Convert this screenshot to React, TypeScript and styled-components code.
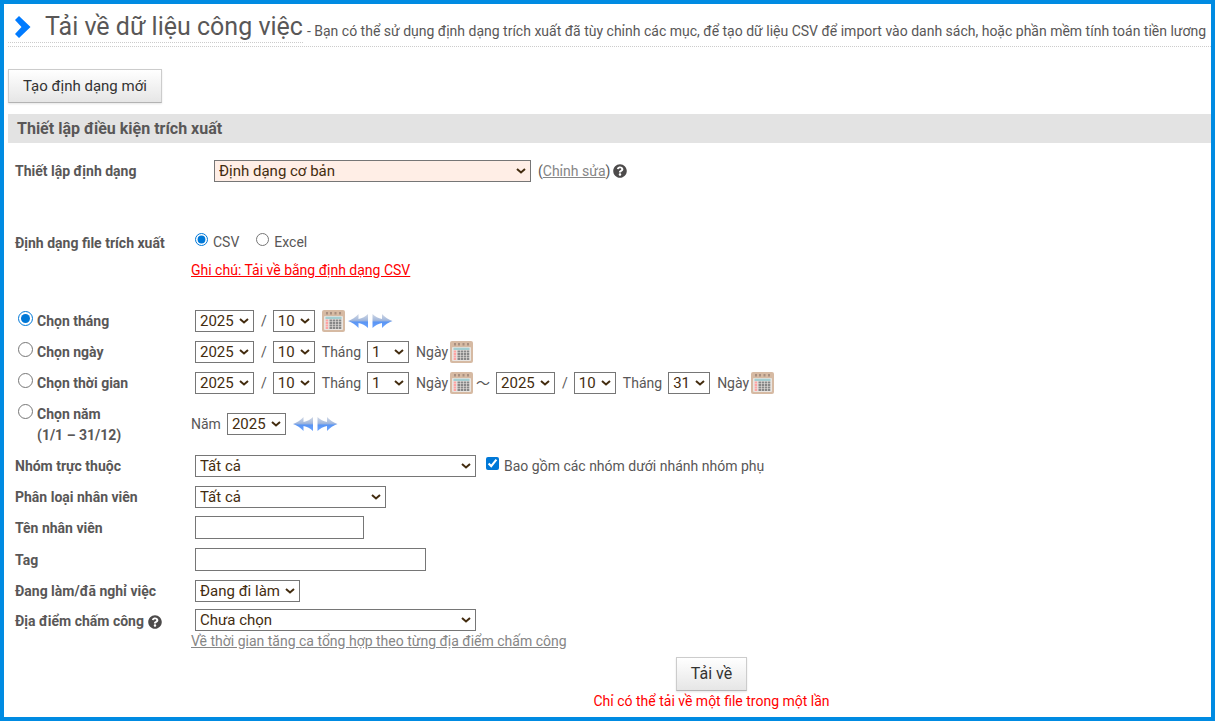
import React from "react";
import styled, { createGlobalStyle } from "styled-components";

const Global = createGlobalStyle`
  * { box-sizing: border-box; }
  body {
    margin: 0;
    background: #fff;
    color: #595757;
    font-family: Roboto, "Noto Sans", "Noto Sans CJK JP", sans-serif;
    font-size: 14px;
    line-height: 20px;
  }
  #root { min-height: 100vh; display: flex; }
`;

const Page = styled.main`
  flex: 1;
  min-width: 0;
  padding: 4px 0 4px 4px;
  border: 4px solid #008be2;
`;

const TitleBar = styled.header`
  display: flex;
  align-items: flex-start;
  height: 39px;
  border-bottom: 1px dotted #ccc;
`;

const Title = styled.h1`
  display: flex;
  align-items: center;
  height: 35px;
  margin: 0;
  padding: 3px 0 0 7px;
  gap: 13px;
  border-bottom: 1px dotted #ccc;
  font-size: 25px;
  font-weight: 400;
  line-height: 32px;
  white-space: nowrap;
`;

const Lead = styled.p`
  margin: 0;
  padding: 13px 0 0 4px;
  white-space: nowrap;
`;

const Button = styled.button<{ $large?: boolean }>`
  height: 34px;
  padding: 0 14px;
  border: 1px solid #ccc;
  border-bottom-color: #b3b3b3;
  background: linear-gradient(#fff, #e6e6e6);
  box-shadow: 0 1px 2px rgba(0, 0, 0, 0.1);
  color: #333;
  font: 400 ${(p) => (p.$large ? 16 : 15)}px/20px Roboto, sans-serif;
`;

const Toolbar = styled.div`
  padding: 22px 0 11px;
`;

const SectionTitle = styled.h2`
  margin: 0;
  padding: 5px 9px 4px;
  background: #e3e3e3;
  font-size: 16px;
  line-height: 20px;
`;

const Form = styled.form`
  display: flex;
  flex-direction: column;
  padding: 12px 0 0 7px;
`;

const Row = styled.div<{ $height?: number; $top?: number }>`
  display: grid;
  grid-template-columns: 176px 1fr;
  align-items: ${(p) => (p.$top ? "start" : "center")};
  min-height: ${(p) => p.$height ?? 31}px;
  padding-top: ${(p) => p.$top ?? 0}px;
`;

const Label = styled.label`
  display: flex;
  align-items: center;
  gap: 4px;
  padding-top: 2px;
  font-weight: 700;
  line-height: 21px;
`;

const Choice = styled.label<{ $strong?: boolean }>`
  display: flex;
  align-items: flex-start;
  gap: ${(p) => (p.$strong ? 4 : 5)}px;
  padding-top: ${(p) => (p.$strong ? 2 : 1)}px;
  font-weight: ${(p) => (p.$strong ? 700 : 400)};
  line-height: 21px;
`;

const Tick = styled.input<{ $large?: boolean }>`
  width: ${(p) => (p.$large ? 15 : 13)}px;
  height: ${(p) => (p.$large ? 15 : 13)}px;
  margin: ${(p) => (p.$large ? "0 0 0 3px" : "1px 0 0 4px")};
  flex: none;
  accent-color: #0078d7;
`;

const Fields = styled.div<{ $indent?: number }>`
  display: flex;
  align-items: center;
  padding-left: ${(p) => p.$indent ?? 4}px;
`;

const Stack = styled.div<{ $gap?: number }>`
  display: flex;
  flex-direction: column;
  align-items: flex-start;
  gap: ${(p) => p.$gap ?? 0}px;
`;

const Gap = styled.span<{ $l?: number; $r?: number }>`
  padding-left: ${(p) => p.$l ?? 7}px;
  padding-right: ${(p) => p.$r ?? 6}px;
`;

const arrow =
  "data:image/svg+xml,%3Csvg xmlns='http://www.w3.org/2000/svg' width='10' height='6'%3E%3Cpath d='M1 1 L5 4.500 L9 1' fill='none' stroke='%23432c0f' stroke-width='2'/%3E%3C/svg%3E";

const Select = styled.select<{ $width: number; $tint?: boolean }>`
  appearance: none;
  width: ${(p) => p.$width}px;
  height: 22px;
  padding: 0 0 0 4px;
  border: 1px solid #767676;
  border-radius: 0;
  background: ${(p) => (p.$tint ? "#ffeee6" : "#fff")} url("${arrow}") no-repeat right 4px center;
  color: #432c0f;
  font: 400 15px/20px Roboto, sans-serif;
`;

const TextBox = styled.input<{ $width: number }>`
  width: ${(p) => p.$width}px;
  height: 23px;
  padding: 1px 4px;
  border: 1px solid #767676;
  color: #432c0f;
  font: 400 15px/20px Roboto, sans-serif;
`;

const Link = styled.a`
  color: #868686;
`;

const Note = styled.span<{ $underline?: boolean }>`
  color: #f00;
  text-decoration: ${(p) => (p.$underline ? "underline" : "none")};
`;

const IconButton = styled.button`
  display: flex;
  padding: 0;
  border: 0;
  background: none;
`;

const Steps = styled.div<{ $indent?: number }>`
  display: flex;
  gap: 3px;
  padding-left: ${(p) => p.$indent ?? 3}px;
`;

const Footer = styled.div`
  display: flex;
  flex-direction: column;
  align-items: center;
  padding: 5px 0 0 197px;
`;

const Chevron = () => (
  <svg width="17" height="24" viewBox="0 0 17 24" aria-hidden="true">
    <path d="M0 5 L4 1 L15.500 12 L4 23 L0 19 L6.500 12 Z" fill="#007bff" />
  </svg>
);

const Help = () => (
  <svg width="14" height="14" viewBox="0 0 512 512" aria-label="?">
    <path
      fill="#4d4b4b"
      d="M504 256c0 137-111 248-248 248S8 393 8 256 119 8 256 8s248 111 248 248zM262.700 90c-54.500 0-89.300 23-116.500 63.800-3.500 5.300-2.400 12.400 2.700 16.300l34.700 26.300c5.200 3.900 12.600 3 16.700-2.100 17.900-22.700 30.100-35.800 57.300-35.800 20.400 0 45.700 13.100 45.700 33 0 15-12.400 22.700-32.500 34C247.100 238.500 216 254.900 216 296v4c0 6.600 5.400 12 12 12h56c6.600 0 12-5.400 12-12v-1.300c0-28.500 83.200-29.600 83.200-106.700 0-58-60.200-102-116.500-102zM256 338c-25.400 0-46 20.600-46 46s20.600 46 46 46 46-20.600 46-46-20.600-46-46-46z"
    />
  </svg>
);

const Calendar = () => (
  <IconButton type="button" aria-label="Lịch">
    <svg width="23" height="22" viewBox="0 0 23 22">
      <rect width="23" height="22" rx="2" fill="#d6baa3" />
      {[4, 8, 12.5, 17].map((x) => (
        <rect key={x} x={x} y="2" width="2" height="2.500" fill="#a88f80" />
      ))}
      <rect x="2" y="6" width="19" height="14" rx="1" fill="#e9e5e1" />
      <rect x="3.500" y="6.700" width="16" height="2.300" fill="#a3cdd0" />
      {[9.5, 12, 14.5, 17].map((y) =>
        [3.7, 7.5, 10.6, 13.7, 16.8].map((x) => (
          <rect key={`${x}-${y}`} x={x} y={y} width={2.5} height="2" fill={x < 5 ? "#ffa3a3" : "#878787"} />
        ))
      )}
    </svg>
  </IconButton>
);

const Arrows = ({ id, indent }: { id: string; indent?: number }) => (
  <Steps $indent={indent}>
    <IconButton type="button" aria-label="Trước">
      <svg width="21" height="14" viewBox="0 0 21 14">
        <linearGradient id={id} x1="0" y1="0" x2="0" y2="1">
          <stop offset="0" stopColor="#d0d8e6" />
          <stop offset="0.450" stopColor="#a3b8dc" />
          <stop offset="0.580" stopColor="#5a95f4" />
          <stop offset="1" stopColor="#6ca4ff" />
        </linearGradient>
        <path d="M0 7 Q6 5 10.500 0 V5 Q16 4 20 0 V14 Q16 10 10.500 9 V14 Q6 9 0 7 Z" fill={`url(#${id})`} />
      </svg>
    </IconButton>
    <IconButton type="button" aria-label="Sau">
      <svg width="21" height="14" viewBox="0 0 21 14">
        <path d="M20.500 7 Q14.500 5 10 0 V5 Q4.500 4 .5 0 V14 Q4.500 10 10 9 V14 Q14.500 9 20.500 7 Z" fill={`url(#${id})`} />
      </svg>
    </IconButton>
  </Steps>
);

const Pick = ({ value, width, label }: { value: string; width: number; label: string }) => (
  <Select $width={width} aria-label={label} defaultValue={value}>
    <option>{value}</option>
  </Select>
);

const YearMonth = () => (
  <>
    <Pick value="2025" width={59} label="Năm" />
    <Gap>/</Gap>
    <Pick value="10" width={42} label="Tháng" />
  </>
);

const FullDate = ({ day }: { day: string }) => (
  <>
    <YearMonth />
    <Gap>Tháng</Gap>
    <Pick value={day} width={42} label="Ngày" />
    <Gap $r={2}>Ngày</Gap>
    <Calendar />
  </>
);

const PeriodChoice = ({ children, checked }: { children: React.ReactNode; checked?: boolean }) => (
  <Choice $strong>
    <Tick $large type="radio" name="period" defaultChecked={checked} />
    <span>{children}</span>
  </Choice>
);

export default function App() {
  return (
    <>
      <Global />
      <Page>
        <TitleBar>
          <Title>
            <Chevron />
            Tải về dữ liệu công việc
          </Title>
          <Lead>
            - Bạn có thể sử dụng định dạng trích xuất đã tùy chỉnh các mục, để tạo dữ liệu CSV để import vào danh sách, hoặc phần mềm tính toán tiền lương
          </Lead>
        </TitleBar>
        <Toolbar>
          <Button type="button">Tạo định dạng mới</Button>
        </Toolbar>
        <SectionTitle>Thiết lập điều kiện trích xuất</SectionTitle>
        <Form onSubmit={(e) => e.preventDefault()}>
          <Row>
            <Label htmlFor="format">Thiết lập định dạng</Label>
            <Fields $indent={23}>
              <Select id="format" $width={317} $tint>
                <option>Định dạng cơ bản</option>
              </Select>
              <Gap $r={3}>
                (<Link href="#edit">Chỉnh sửa</Link>)
              </Gap>
              <Help />
            </Fields>
          </Row>
          <Row $height={119} $top={45}>
            <Label as="span">Định dạng file trích xuất</Label>
            <Stack $gap={7}>
              <Fields $indent={0}>
                <Choice>
                  <Tick type="radio" name="file" defaultChecked />
                  CSV
                </Choice>
                <Gap />
                <Choice>
                  <Tick type="radio" name="file" />
                  Excel
                </Choice>
              </Fields>
              <Note $underline>Ghi chú: Tải về bằng định dạng CSV</Note>
            </Stack>
          </Row>
          <Row>
            <PeriodChoice checked>Chọn tháng</PeriodChoice>
            <Fields>
              <YearMonth />
              <Gap $r={0} />
              <Calendar />
              <Arrows id="month-steps" />
            </Fields>
          </Row>
          <Row>
            <PeriodChoice>Chọn ngày</PeriodChoice>
            <Fields>
              <FullDate day="1" />
            </Fields>
          </Row>
          <Row>
            <PeriodChoice>Chọn thời gian</PeriodChoice>
            <Fields>
              <FullDate day="1" />
              <Gap $l={3}>～</Gap>
              <FullDate day="31" />
            </Fields>
          </Row>
          <Row $height={52}>
            <PeriodChoice>
              Chọn năm
              <br />
              (1/1 – 31/12)
            </PeriodChoice>
            <Fields $indent={0}>
              <Gap $l={0}>Năm</Gap>
              <Pick value="2025" width={59} label="Năm" />
              <Arrows id="year-steps" indent={7} />
            </Fields>
          </Row>
          <Row>
            <Label htmlFor="group">Nhóm trực thuộc</Label>
            <Fields>
              <Select id="group" $width={281}>
                <option>Tất cả</option>
              </Select>
              <Gap $l={0} />
              <Choice>
                <Tick type="checkbox" defaultChecked />
                Bao gồm các nhóm dưới nhánh nhóm phụ
              </Choice>
            </Fields>
          </Row>
          <Row>
            <Label htmlFor="kind">Phân loại nhân viên</Label>
            <Fields>
              <Select id="kind" $width={191}>
                <option>Tất cả</option>
              </Select>
            </Fields>
          </Row>
          <Row>
            <Label htmlFor="name">Tên nhân viên</Label>
            <Fields>
              <TextBox id="name" type="text" $width={169} />
            </Fields>
          </Row>
          <Row $height={32}>
            <Label htmlFor="tag">Tag</Label>
            <Fields>
              <TextBox id="tag" type="text" $width={231} />
            </Fields>
          </Row>
          <Row>
            <Label htmlFor="status">Đang làm/đã nghỉ việc</Label>
            <Fields>
              <Select id="status" $width={105}>
                <option>Đang đi làm</option>
              </Select>
            </Fields>
          </Row>
          <Row $top={3} $height={46}>
            <Label htmlFor="place">
              Địa điểm chấm công <Help />
            </Label>
            <Stack>
              <Fields>
                <Select id="place" $width={281}>
                  <option>Chưa chọn</option>
                </Select>
              </Fields>
              <Link href="#overtime">Về thời gian tăng ca tổng hợp theo từng địa điểm chấm công</Link>
            </Stack>
          </Row>
          <Footer>
            <Button type="submit" $large>Tải về</Button>
            <Note>Chỉ có thể tải về một file trong một lần</Note>
          </Footer>
        </Form>
      </Page>
    </>
  );
}
